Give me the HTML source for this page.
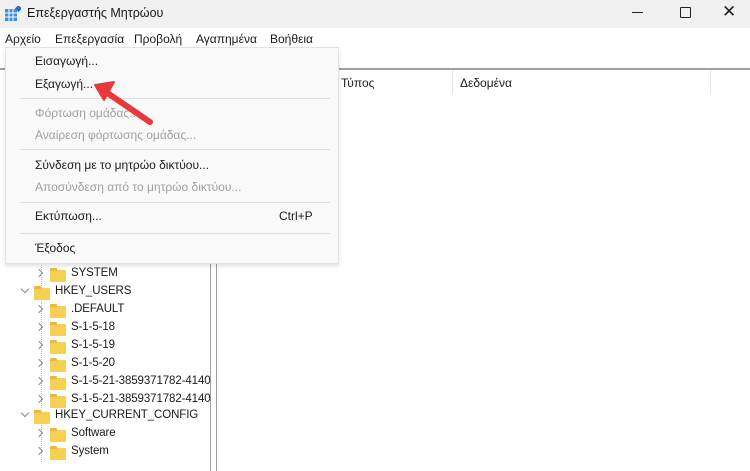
<!DOCTYPE html><html><head><meta charset="utf-8"><style>
body{margin:0;width:750px;height:471px;overflow:hidden;background:#fff;font-family:"Liberation Sans","DejaVu Sans",sans-serif;font-size:12px;color:#1a1a1a;position:relative}
.a{position:absolute;white-space:nowrap}
.dis{color:#a0a0a0}
.t{font-size:11.5px;letter-spacing:-0.1px}
.sep{position:absolute;left:20px;width:310px;height:1px;background:#e0e0e0}
.fold{position:absolute;width:16px;height:12px;background:#f8cf55;border-radius:1px}
.fold:before{content:"";position:absolute;left:0;top:-2px;width:7px;height:3px;background:#e9b93d;border-radius:1px 1px 0 0}
.chev{position:absolute;width:5px;height:5px;border-right:1.3px solid #888;border-bottom:1.3px solid #888}
</style></head><body>
<div class="a" style="left:0;top:0;width:750px;height:28px;background:#f0f0f0"></div>
<svg class="a" style="left:5px;top:6px" width="16" height="16"><rect x="0" y="3" width="12" height="12" fill="#3b8ee0"/><g stroke="#fff" stroke-width="1"><line x1="4" y1="3" x2="4" y2="15"/><line x1="8" y1="3" x2="8" y2="15"/><line x1="0" y1="7" x2="12" y2="7"/><line x1="0" y1="11" x2="12" y2="11"/></g><rect x="11" y="0" width="5" height="5" fill="#1f6fc8" transform="rotate(45 13.5 2.5)"/></svg>
<div class="a" style="left:27px;top:6px;font-size:12.5px">Επεξεργαστής Μητρώου</div>
<div class="a" style="left:632px;top:12px;width:11px;height:1px;background:#222"></div>
<div class="a" style="left:680px;top:7px;width:9px;height:9px;border:1px solid #222;border-radius:1px"></div>
<div class="a" style="left:722px;top:2px;font-size:17px;color:#222">✕</div>
<div class="a" style="left:5px;top:32px">Αρχείο</div>
<div class="a" style="left:55px;top:32px">Επεξεργασία</div>
<div class="a" style="left:134px;top:32px">Προβολή</div>
<div class="a" style="left:196px;top:32px">Αγαπημένα</div>
<div class="a" style="left:270px;top:32px">Βοήθεια</div>
<div class="a" style="left:0;top:68px;width:750px;height:2px;background:#a0a0a0"></div>
<div class="a" style="left:341px;top:76px">Τύπος</div>
<div class="a" style="left:452px;top:70px;width:1px;height:24px;background:#e5e5e5"></div>
<div class="a" style="left:460px;top:76px">Δεδομένα</div>
<div class="a" style="left:710px;top:70px;width:1px;height:24px;background:#e5e5e5"></div>
<div class="a" style="left:210px;top:70px;width:1px;height:401px;background:#a0a0a0"></div>
<div class="a" style="left:216px;top:70px;width:1px;height:401px;background:#a0a0a0"></div>
<div class="a" style="left:41px;top:262px;width:0;height:200px;border-left:1px dotted #bbb"></div>
<div class="chev" style="left:36px;top:270px;transform:rotate(-45deg)"></div><div class="fold" style="left:50px;top:270px"></div><div class="a t" style="left:71px;top:267px">SYSTEM</div>
<div class="chev" style="left:22px;top:286px;transform:rotate(45deg)"></div><div class="fold" style="left:34px;top:288px"></div><div class="a t" style="left:55px;top:285px">HKEY_USERS</div>
<div class="chev" style="left:36px;top:306px;transform:rotate(-45deg)"></div><div class="fold" style="left:50px;top:306px"></div><div class="a t" style="left:71px;top:303px">.DEFAULT</div>
<div class="chev" style="left:36px;top:324px;transform:rotate(-45deg)"></div><div class="fold" style="left:50px;top:324px"></div><div class="a t" style="left:71px;top:321px">S-1-5-18</div>
<div class="chev" style="left:36px;top:342px;transform:rotate(-45deg)"></div><div class="fold" style="left:50px;top:342px"></div><div class="a t" style="left:71px;top:339px">S-1-5-19</div>
<div class="chev" style="left:36px;top:360px;transform:rotate(-45deg)"></div><div class="fold" style="left:50px;top:360px"></div><div class="a t" style="left:71px;top:357px">S-1-5-20</div>
<div class="chev" style="left:36px;top:378px;transform:rotate(-45deg)"></div><div class="fold" style="left:50px;top:378px"></div><div class="a t" style="left:71px;top:375px">S-1-5-21-3859371782-4140</div>
<div class="chev" style="left:36px;top:396px;transform:rotate(-45deg)"></div><div class="fold" style="left:50px;top:396px"></div><div class="a t" style="left:71px;top:393px">S-1-5-21-3859371782-4140</div>
<div class="chev" style="left:22px;top:410px;transform:rotate(45deg)"></div><div class="fold" style="left:34px;top:412px"></div><div class="a t" style="left:55px;top:409px">HKEY_CURRENT_CONFIG</div>
<div class="chev" style="left:36px;top:430px;transform:rotate(-45deg)"></div><div class="fold" style="left:50px;top:430px"></div><div class="a t" style="left:71px;top:427px">Software</div>
<div class="chev" style="left:36px;top:448px;transform:rotate(-45deg)"></div><div class="fold" style="left:50px;top:448px"></div><div class="a t" style="left:71px;top:445px">System</div>
<div class="a" style="left:5px;top:47px;width:332px;height:215px;background:#f9f9f9;border:1px solid #e2e2e2;box-shadow:0 2px 4px rgba(0,0,0,.12)"></div>
<div class="a" style="left:35px;top:54px">Εισαγωγή...</div>
<div class="a" style="left:35px;top:77px">Εξαγωγή...</div>
<div class="sep" style="top:98px"></div>
<div class="a dis" style="left:35px;top:106px">Φόρτωση ομάδας...</div>
<div class="a dis" style="left:35px;top:128px">Αναίρεση φόρτωσης ομάδας...</div>
<div class="sep" style="top:149px"></div>
<div class="a" style="left:35px;top:158px">Σύνδεση με το μητρώο δικτύου...</div>
<div class="a dis" style="left:35px;top:180px">Αποσύνδεση από το μητρώο δικτύου...</div>
<div class="sep" style="top:202px"></div>
<div class="a" style="left:35px;top:209px">Εκτύπωση...</div>
<div class="a" style="left:279px;top:209px">Ctrl+P</div>
<div class="sep" style="top:233px"></div>
<div class="a" style="left:35px;top:241px">Έξοδος</div>
<svg class="a" style="left:0;top:0" width="750" height="471"><line x1="150" y1="122" x2="106" y2="92" stroke="#e8383b" stroke-width="6" stroke-linecap="round"/><polygon points="95,85 114,82 104,100" fill="#e8383b" stroke="#e8383b" stroke-width="2" stroke-linejoin="round"/></svg>
</body></html>
